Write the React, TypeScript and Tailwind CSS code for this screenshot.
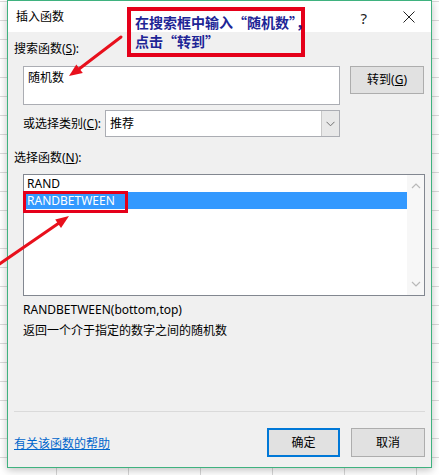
import React from 'react';

const ui = "font-['Noto_Sans','Noto_Sans_CJK_SC',sans-serif]";

const Chevron = ({ up = false }: { up?: boolean }) => (
    <svg width="10" height="6" viewBox="0 0 10 6" className="block">
        <path
            d={up ? 'M1 5 L5 1 L9 5' : 'M1 1 L5 5 L9 1'}
            fill="none"
            stroke="#b9b9b9"
            strokeWidth="1.2"
        />
    </svg>
);

const Arrows = () => (
    <svg width="439" height="475" className="absolute left-0 top-0 pointer-events-none">
        {/* arrow towards the search box */}
        <line x1="121" y1="37" x2="79" y2="69" stroke="#e8101c" strokeWidth="3" strokeLinecap="round" />
        <polygon points="69,76 76.3,64.6 82.8,73" fill="#e8101c" />
        {/* arrow towards RANDBETWEEN */}
        <line x1="-2" y1="265" x2="59" y2="223" stroke="#e8101c" strokeWidth="3" strokeLinecap="round" />
        <polygon points="69,216 61,228 55.2,219.6" fill="#e8101c" />
    </svg>
);

export default function App() {
    return (
        <div
            className={`relative w-[439px] h-[475px] overflow-hidden bg-white bg-[repeating-linear-gradient(to_bottom,transparent_0_1px,#dadada_1px_2px,transparent_2px_19px),repeating-linear-gradient(to_right,transparent_0_56px,#d6d6d6_56px_57px,transparent_57px_72px)] ${ui}`}
        >
            {/* DIALOG */}
            <div className="ml-[7px] w-[425px] h-[468px] flex flex-col border border-[#3fb27f] bg-[#f0f0f0] shadow-[0_2px_8px_rgba(0,0,0,0.25)] text-[12px] leading-[16px] text-black">
                {/* title bar */}
                <div className="h-[31px] bg-white flex items-center pl-[8px] pr-[16px]">
                    <span className="flex-1">插入函数</span>
                    <span className="text-[15px] text-[#222] mr-[36px] mt-[2px]">?</span>
                    <svg width="12" height="12" viewBox="0 0 12 12">
                        <path d="M0.5 0.5 L11.5 11.5 M11.5 0.5 L0.5 11.5" stroke="#222" strokeWidth="1" />
                    </svg>
                </div>

                {/* body */}
                <div className="flex flex-col px-[6px] pt-[9px] pb-[9px]">
                    <div className="h-[16px]">
                        搜索函数(<span className="underline">S</span>):
                    </div>

                    <div className="mt-[9px] ml-[9px] flex items-start">
                        <div className="w-[317px] h-[39px] bg-white border border-[#abadb3] px-[4px] pt-[3px]">随机数</div>
                        <button className="ml-[10px] w-[74px] h-[28px] bg-[#e1e1e1] border border-[#adadad] flex items-center justify-center">
                            转到(<span className="underline">G</span>)
                        </button>
                    </div>

                    <div className="mt-[5px] ml-[9px] flex items-center h-[27px]">
                        <span className="w-[82px] whitespace-nowrap">
                            或选择类别(<span className="underline">C</span>):
                        </span>
                        <div className="w-[235px] h-[27px] flex bg-white border border-[#abadb3]">
                            <div className="flex-1 flex items-center pl-[4px]">推荐</div>
                            <div className="w-[18px] bg-[#e8e8e8] border-l border-[#c8c8c8] flex items-center justify-center">
                                <svg width="9" height="6" viewBox="0 0 9 6">
                                    <path d="M0.5 0.8 L4.5 4.8 L8.5 0.8" fill="none" stroke="#707070" strokeWidth="1" />
                                </svg>
                            </div>
                        </div>
                    </div>

                    <div className="mt-[13px] h-[16px]">
                        选择函数(<span className="underline">N</span>):
                    </div>

                    {/* function list */}
                    <div className="mt-[8px] ml-[9px] w-[402px] h-[122px] bg-white border border-[#828790] flex">
                        <div className="flex-1 flex flex-col">
                            <div className="h-[17px] pl-[3px] flex items-center">RAND</div>
                            <div className="h-[17px] pl-[3px] flex items-center bg-[#3399ff] text-white">RANDBETWEEN</div>
                        </div>
                        <div className="w-[17px] bg-[#f7f7f7] flex flex-col items-center justify-between py-[8px]">
                            <Chevron up />
                            <Chevron />
                        </div>
                    </div>

                    <div className="mt-[6px] ml-[9px] h-[16px]">RANDBETWEEN(bottom,top)</div>
                    <div className="mt-[5px] ml-[9px] h-[16px]">返回一个介于指定的数字之间的随机数</div>

                    <div className="mt-[72px] h-px bg-[#dadada]" />

                    <div className="mt-[16px] flex items-center h-[29px]">
                        <a className="flex-1 text-[#0066cc] underline mt-[2px]">有关该函数的帮助</a>
                        <button className="w-[73px] h-[29px] bg-[#e1e1e1] border-2 border-[#0078d7] flex items-center justify-center">
                            确定
                        </button>
                        <button className="ml-[11px] w-[74px] h-[29px] bg-[#e1e1e1] border border-[#adadad] flex items-center justify-center">
                            取消
                        </button>
                    </div>
                </div>
            </div>

            {/* ANNOTATIONS */}
            <div className="absolute left-[127px] top-[7px] w-[178px] h-[50px] border-4 border-[#e5001a]" />
            <div className="absolute left-[135px] top-[13px] whitespace-nowrap font-['Noto_Sans_CJK_SC',sans-serif] font-bold text-[14px] leading-[19px] text-[#1e2596]">
                在搜索框中输入“随机数”，
                <br />
                点击“转到”
            </div>
            <div className="absolute left-[23px] top-[191px] w-[105px] h-[22px] border-[3px] border-[#e5001a]" />
            <Arrows />
        </div>
    );
}
